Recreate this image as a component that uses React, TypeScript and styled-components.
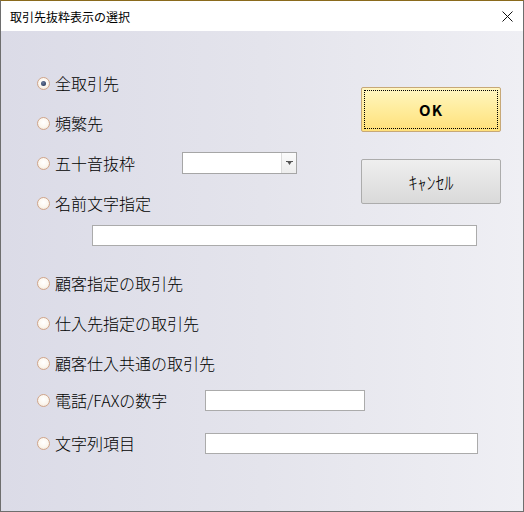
import styled, { createGlobalStyle } from 'styled-components';

const GlobalStyle = createGlobalStyle`
  html, body {
    margin: 0;
    padding: 0;
  }
  body {
    font-family: 'Noto Sans CJK JP', 'Noto Sans', sans-serif;
    color: #000;
  }
`;

const Window = styled.div`
  box-sizing: border-box;
  width: 524px;
  height: 512px;
  display: flex;
  flex-direction: column;
  border: 1px solid #6e6e6e;
  border-top-color: #8a6a1c;
  background: #fff;
`;

const TitleBar = styled.div`
  height: 30px;
  display: flex;
  align-items: center;
  justify-content: space-between;
  padding: 0 10px 0 9px;
  background: #fff;
  font-size: 12px;
`;

const Body = styled.div`
  flex: 1;
  display: flex;
  flex-direction: column;
  padding-left: 36px;
  padding-right: 22px;
  background: linear-gradient(90deg, #dbdbe7 0%, #e4e4ec 50%, #efeff4 100%);
`;

const Top = styled.div`
  display: flex;
  justify-content: space-between;
`;

const Column = styled.div`
  display: flex;
  flex-direction: column;
  padding-top: 41px;
`;

const Buttons = styled.div`
  display: flex;
  flex-direction: column;
  gap: 27px;
  padding-top: 56px;
`;

const Row = styled.div<{ $mt?: number }>`
  height: 22px;
  display: flex;
  align-items: center;
  margin-top: ${(p) => p.$mt ?? 0}px;
`;

const Radio = styled.span<{ $checked?: boolean }>`
  box-sizing: border-box;
  width: 13px;
  height: 13px;
  border-radius: 50%;
  border: 1px solid #d0a58a;
  background: radial-gradient(circle at 50% 40%, #ffffff 0%, #fbf6ee 55%, #ecdccc 100%);
  display: flex;
  align-items: center;
  justify-content: center;
  margin-right: 5px;
  &::after {
    content: '';
    display: ${(p) => (p.$checked ? 'block' : 'none')};
    width: 5px;
    height: 5px;
    border-radius: 50%;
    background: radial-gradient(circle at 40% 35%, #6c7ea0 0%, #1e2c4c 100%);
  }
`;

const Label = styled.span<{ $w?: number }>`
  font-size: 16px;
  font-weight: 300;
  line-height: 22px;
  white-space: nowrap;
  width: ${(p) => (p.$w ? `${p.$w}px` : 'auto')};
`;

const TextBox = styled.div<{ $w: number; $ml?: number }>`
  box-sizing: border-box;
  width: ${(p) => p.$w}px;
  height: 21px;
  margin-left: ${(p) => p.$ml ?? 0}px;
  background: #fff;
  border: 1px solid #ababab;
`;

const Combo = styled.div`
  box-sizing: border-box;
  width: 115px;
  height: 22px;
  display: flex;
  justify-content: flex-end;
  background: #fff;
  border: 1px solid #a6a6a6;
`;

const ComboArrow = styled.div`
  width: 14px;
  display: flex;
  align-items: center;
  justify-content: center;
  border-left: 1px solid #dcdcdc;
  background: linear-gradient(180deg, #fbfbfb 0%, #ededed 100%);
`;

const Button = styled.div<{ $primary?: boolean }>`
  box-sizing: border-box;
  width: 140px;
  height: 45px;
  display: flex;
  align-items: center;
  justify-content: center;
  border-radius: 2px;
  border: 1px solid ${(p) => (p.$primary ? '#c7a877' : '#acacac')};
  background: ${(p) =>
    p.$primary
      ? 'linear-gradient(180deg, #fff6c2 0%, #ffec9c 50%, #ffe07a 100%)'
      : 'linear-gradient(180deg, #efefef 0%, #e4e4e4 50%, #d9d9d9 100%)'};
  font-size: ${(p) => (p.$primary ? '15px' : '18px')};
  font-weight: ${(p) => (p.$primary ? 700 : 300)};
  letter-spacing: ${(p) => (p.$primary ? '1px' : '0')};
  position: relative;
  &::before {
    content: '';
    display: ${(p) => (p.$primary ? 'block' : 'none')};
    position: absolute;
    inset: 2px;
    border: 1px dotted #000;
  }
`;

const CloseIcon = () => (
  <svg width="11" height="11" viewBox="0 0 11 11">
    <path d="M0.5 0.5 L10.5 10.5 M10.5 0.5 L0.5 10.5" stroke="#111" strokeWidth="1" />
  </svg>
);

const ArrowIcon = () => (
  <svg width="7" height="5" viewBox="0 0 7 5">
    <path d="M0 0 H7 V1 H0 Z M1.5 1 H5.5 L3.5 4 Z" fill="#555" />
  </svg>
);

export default function App() {
  return (
    <>
      <GlobalStyle />
      <Window>
        <TitleBar>
          <span>取引先抜粋表示の選択</span>
          <CloseIcon />
        </TitleBar>
        <Body>
          <Top>
            <Column>
              <Row>
                <Radio $checked />
                <Label>全取引先</Label>
              </Row>
              <Row $mt={18}>
                <Radio />
                <Label>頻繁先</Label>
              </Row>
              <Row $mt={18}>
                <Radio />
                <Label $w={127}>五十音抜枠</Label>
                <Combo>
                  <ComboArrow>
                    <ArrowIcon />
                  </ComboArrow>
                </Combo>
              </Row>
              <Row $mt={18}>
                <Radio />
                <Label>名前文字指定</Label>
              </Row>
            </Column>
            <Buttons>
              <Button $primary>OK</Button>
              <Button>ｷｬﾝｾﾙ</Button>
            </Buttons>
          </Top>
          <Row $mt={10}>
            <TextBox $w={385} $ml={55} />
          </Row>
          <Row $mt={26}>
            <Radio />
            <Label>顧客指定の取引先</Label>
          </Row>
          <Row $mt={18}>
            <Radio />
            <Label>仕入先指定の取引先</Label>
          </Row>
          <Row $mt={18}>
            <Radio />
            <Label>顧客仕入共通の取引先</Label>
          </Row>
          <Row $mt={15}>
            <Radio />
            <Label $w={150}>電話/FAXの数字</Label>
            <TextBox $w={160} />
          </Row>
          <Row $mt={21}>
            <Radio />
            <Label $w={150}>文字列項目</Label>
            <TextBox $w={273} />
          </Row>
        </Body>
      </Window>
    </>
  );
}
